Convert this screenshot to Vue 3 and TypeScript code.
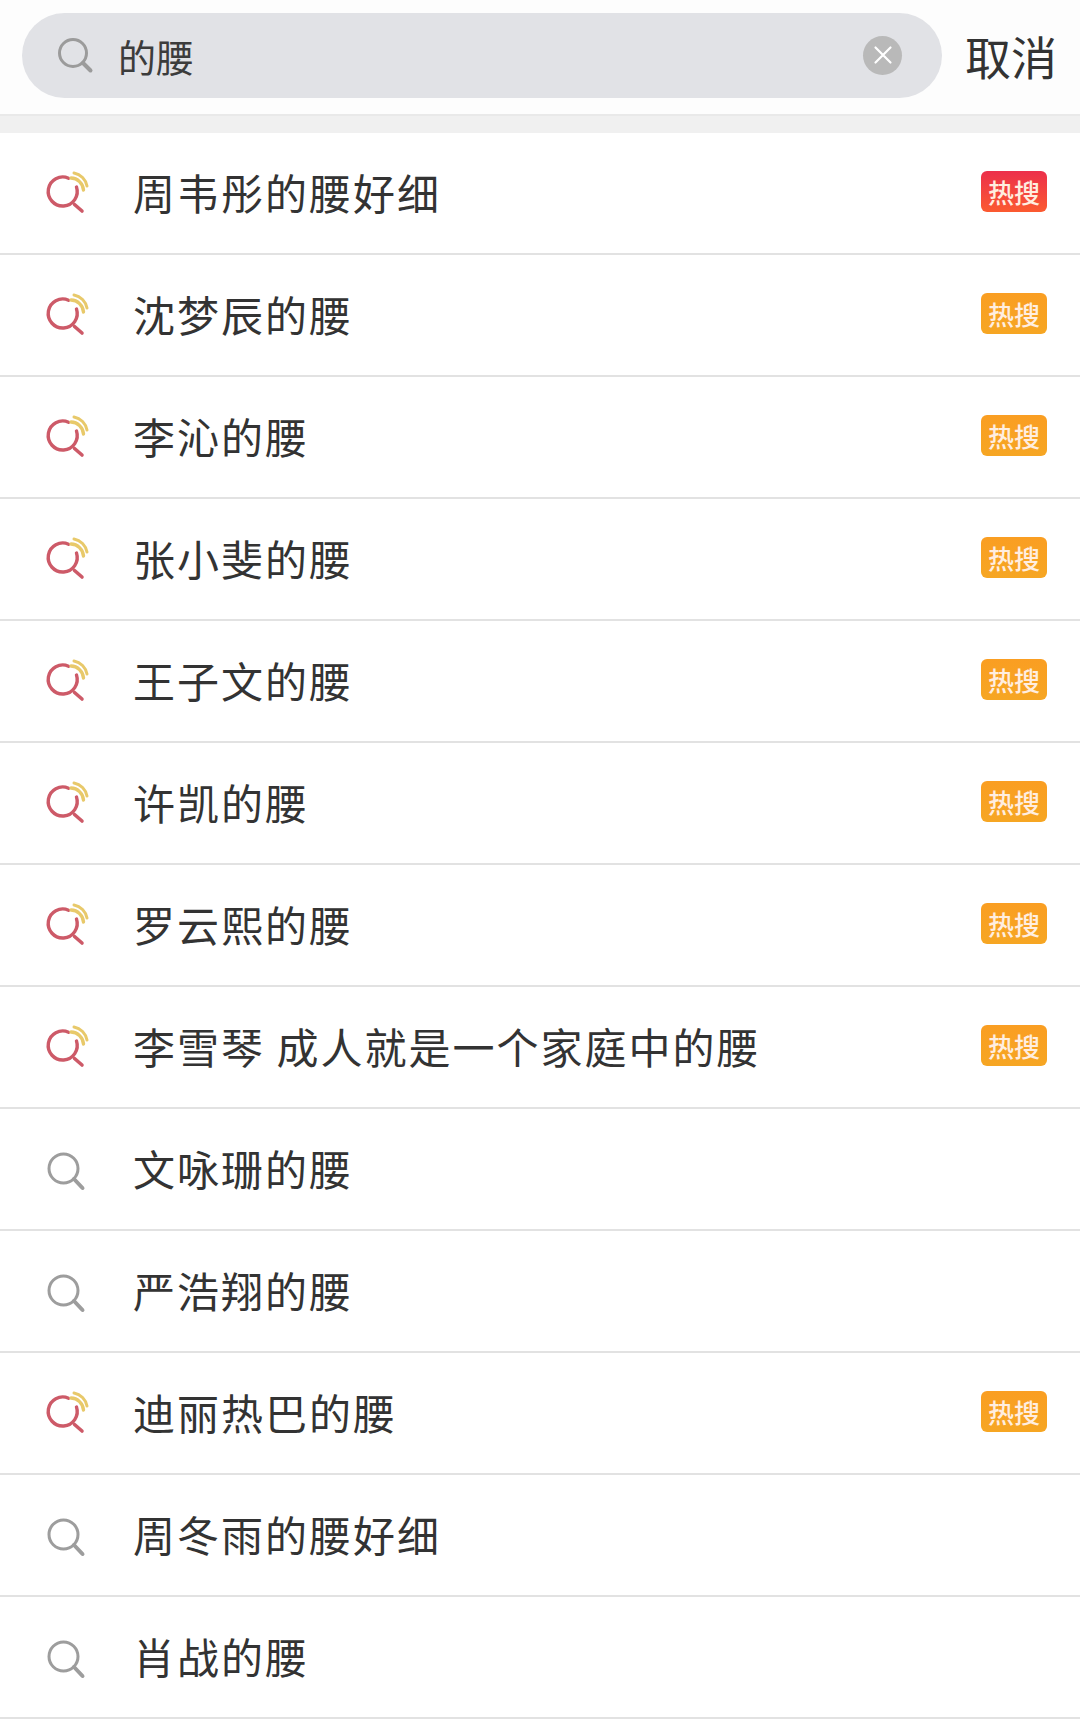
<template>
    <div class="page">
        <header class="top">
            <div class="search">
                <svg class="search-icon" width="42" height="42" viewBox="0 0 42 42">
                    <circle cx="17" cy="17" r="13.500" fill="none" stroke="#9b9b9b" stroke-width="3" />
                    <path d="M27 27L34.500 34.500" fill="none" stroke="#9b9b9b" stroke-width="4" stroke-linecap="round" />
                </svg>
                <span class="query">的腰</span>
                <span class="clear">
                    <svg width="20" height="20" viewBox="0 0 20 20">
                        <path d="M2.5 2.5L17.5 17.5M17.5 2.5L2.5 17.5" stroke="#fff" stroke-width="2.2" stroke-linecap="round" />
                    </svg>
                </span>
            </div>
            <span class="cancel">取消</span>
        </header>
        <div class="band"></div>
        <ul class="list">
            <li v-for="item in items" :key="item.text" class="row">
                <svg v-if="item.hot" class="row-icon" width="46" height="46" viewBox="0 0 46 46">
                    <path d="M24.500 8.200A14.500 14.500 0 1 0 32.500 17" fill="none" stroke="#cd5a68" stroke-width="3.4" stroke-linecap="round" />
                    <path d="M30.500 34.500L38 41" fill="none" stroke="#cd5a68" stroke-width="3.600" stroke-linecap="round" />
                    <path d="M30 3A16 16 0 0 1 43 16" fill="none" stroke="#e8c96a" stroke-width="3" stroke-linecap="round" />
                    <path d="M27 8A13 13 0 0 1 39.500 20" fill="none" stroke="#e8c96a" stroke-width="3.400" stroke-linecap="round" />
                </svg>
                <svg v-else class="row-icon" width="46" height="46" viewBox="0 0 46 46">
                    <circle cx="19.500" cy="22.500" r="14.500" fill="none" stroke="#9d9d9d" stroke-width="3" />
                    <path d="M30 33L38.500 42" fill="none" stroke="#9d9d9d" stroke-width="4" stroke-linecap="round" />
                </svg>
                <span class="label">{{ item.text }}</span>
                <span v-if="item.hot" class="badge" :class="item.hot">热搜</span>
            </li>
        </ul>
    </div>
</template>

<script setup lang="ts">
type Item = {
    text: string;
    hot?: 'red' | 'orange';
};

const items: Item[] = [
    {text: '周韦彤的腰好细', hot: 'red'},
    {text: '沈梦辰的腰', hot: 'orange'},
    {text: '李沁的腰', hot: 'orange'},
    {text: '张小斐的腰', hot: 'orange'},
    {text: '王子文的腰', hot: 'orange'},
    {text: '许凯的腰', hot: 'orange'},
    {text: '罗云熙的腰', hot: 'orange'},
    {text: '李雪琴 成人就是一个家庭中的腰', hot: 'orange'},
    {text: '文咏珊的腰'},
    {text: '严浩翔的腰'},
    {text: '迪丽热巴的腰', hot: 'orange'},
    {text: '周冬雨的腰好细'},
    {text: '肖战的腰'},
];
</script>

<style>
body {
    margin: 0;
    background: #fff;
}
</style>

<style scoped>
.page {
    width: 1080px;
    height: 1735px;
    overflow: hidden;
    background: #fff;
    font-family: "Noto Sans CJK SC", "Noto Sans", sans-serif;
    color: #333;
}

.top {
    height: 114px;
    box-sizing: border-box;
    padding: 13px 23px 16px 22px;
    display: flex;
    align-items: flex-start;
    justify-content: space-between;
    background: #fdfdfd;
}

.search {
    width: 920px;
    height: 85px;
    box-sizing: border-box;
    padding: 0 40px 0 34px;
    display: flex;
    align-items: center;
    border-radius: 43px;
    background: #e1e2e6;
}

.search-icon {
    flex: none;
    margin-top: 3px;
}

.query {
    margin-left: 20px;
    font-size: 38px;
    line-height: 85px;
    color: #3c3c3c;
}

.clear {
    margin-left: auto;
    margin-top: -1px;
    width: 39px;
    height: 39px;
    display: flex;
    align-items: center;
    justify-content: center;
    border-radius: 50%;
    background: #b9b9b9;
}

.cancel {
    font-size: 46px;
    line-height: 85px;
    color: #333;
}

.band {
    height: 16px;
    border-top: 2px solid #e9e9e9;
    border-bottom: 1px solid #f0f0f0;
    background: #f0f0f0;
}

.list {
    list-style: none;
    margin: 0;
    padding: 0;
}

.row {
    height: 122px;
    box-sizing: border-box;
    padding: 0 33px 0 44px;
    display: flex;
    align-items: center;
    border-bottom: 2px solid #e2e2e2;
}

.row-icon {
    flex: none;
}

.label {
    margin-left: 43px;
    margin-top: -2px;
    font-size: 42px;
    line-height: 60px;
    letter-spacing: 2px;
    white-space: pre;
}

.badge {
    margin-left: auto;
    margin-top: -4px;
    width: 66px;
    height: 41px;
    display: flex;
    align-items: center;
    justify-content: center;
    border-radius: 6px;
    font-size: 26px;
    font-weight: 500;
    line-height: 41px;
    color: #ffeee0;
}

.badge.red {
    background: linear-gradient(180deg, #ec2f4b, #fb5a30);
}

.badge.orange {
    background: linear-gradient(180deg, #fa9e22, #f6a623);
}
</style>
